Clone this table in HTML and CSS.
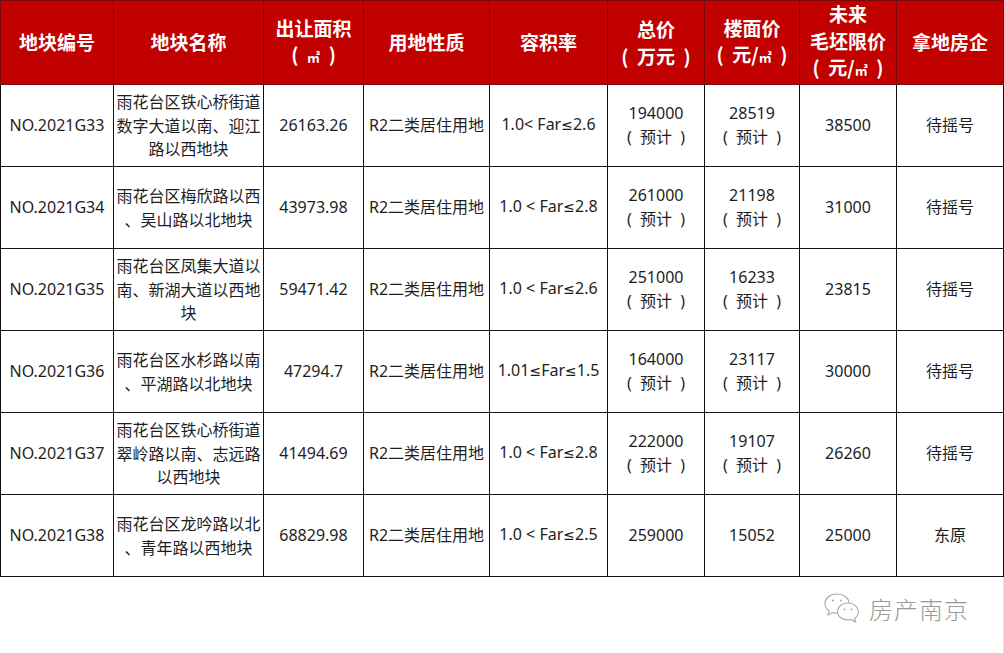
FILE: index.html
```html
<!DOCTYPE html>
<html lang="zh-CN">
<head>
<meta charset="utf-8">
<title>地块</title>
<link rel="stylesheet" href="styles.css">
</head>
<body>
<div class="page">
  <table class="land">
    <colgroup>
      <col class="c1"><col class="c2"><col class="c3"><col class="c4"><col class="c5"><col class="c6"><col class="c7"><col class="c8"><col class="c9">
    </colgroup>
    <thead>
      <tr>
        <th>地块编号</th>
        <th>地块名称</th>
        <th>出让面积<br>(&nbsp;&nbsp;<span class="unit">㎡</span>&nbsp;&nbsp;)</th>
        <th>用地性质</th>
        <th>容积率</th>
        <th>总价<br>(&nbsp;&nbsp;万元&nbsp;&nbsp;)</th>
        <th>楼面价<br>(&nbsp;&nbsp;元/<span class="unit">㎡</span>&nbsp;&nbsp;)</th>
        <th>未来<br>毛坯限价<br>(&nbsp;&nbsp;元/<span class="unit">㎡</span>&nbsp;&nbsp;)</th>
        <th>拿地房企</th>
      </tr>
    </thead>
    <tbody>
      <tr>
        <td>NO.2021G33</td>
        <td class="name">雨花台区铁心桥街道<br>数字大道以南、迎江<br>路以西地块</td>
        <td>26163.26</td>
        <td>R2二类居住用地</td>
        <td>1.0&lt; Far<span class="le">≤</span>2.6</td>
        <td>194000<br>(&nbsp;&nbsp;预计&nbsp;&nbsp;)</td>
        <td>28519<br>(&nbsp;&nbsp;预计&nbsp;&nbsp;)</td>
        <td>38500</td>
        <td>待摇号</td>
      </tr>
      <tr>
        <td>NO.2021G34</td>
        <td class="name">雨花台区梅欣路以西<br>、吴山路以北地块</td>
        <td>43973.98</td>
        <td>R2二类居住用地</td>
        <td>1.0 &lt; Far<span class="le">≤</span>2.8</td>
        <td>261000<br>(&nbsp;&nbsp;预计&nbsp;&nbsp;)</td>
        <td>21198<br>(&nbsp;&nbsp;预计&nbsp;&nbsp;)</td>
        <td>31000</td>
        <td>待摇号</td>
      </tr>
      <tr>
        <td>NO.2021G35</td>
        <td class="name">雨花台区凤集大道以<br>南、新湖大道以西地<br>块</td>
        <td>59471.42</td>
        <td>R2二类居住用地</td>
        <td>1.0 &lt; Far<span class="le">≤</span>2.6</td>
        <td>251000<br>(&nbsp;&nbsp;预计&nbsp;&nbsp;)</td>
        <td>16233<br>(&nbsp;&nbsp;预计&nbsp;&nbsp;)</td>
        <td>23815</td>
        <td>待摇号</td>
      </tr>
      <tr>
        <td>NO.2021G36</td>
        <td class="name">雨花台区水杉路以南<br>、平湖路以北地块</td>
        <td>47294.7</td>
        <td>R2二类居住用地</td>
        <td>1.01<span class="le">≤</span>Far<span class="le">≤</span>1.5</td>
        <td>164000<br>(&nbsp;&nbsp;预计&nbsp;&nbsp;)</td>
        <td>23117<br>(&nbsp;&nbsp;预计&nbsp;&nbsp;)</td>
        <td>30000</td>
        <td>待摇号</td>
      </tr>
      <tr>
        <td>NO.2021G37</td>
        <td class="name">雨花台区铁心桥街道<br>翠岭路以南、志远路<br>以西地块</td>
        <td>41494.69</td>
        <td>R2二类居住用地</td>
        <td>1.0 &lt; Far<span class="le">≤</span>2.8</td>
        <td>222000<br>(&nbsp;&nbsp;预计&nbsp;&nbsp;)</td>
        <td>19107<br>(&nbsp;&nbsp;预计&nbsp;&nbsp;)</td>
        <td>26260</td>
        <td>待摇号</td>
      </tr>
      <tr>
        <td>NO.2021G38</td>
        <td class="name">雨花台区龙吟路以北<br>、青年路以西地块</td>
        <td>68829.98</td>
        <td>R2二类居住用地</td>
        <td>1.0 &lt; Far<span class="le">≤</span>2.5</td>
        <td>259000</td>
        <td>15052</td>
        <td>25000</td>
        <td>东原</td>
      </tr>
    </tbody>
  </table>
  <div class="footer">
    <div class="mark">
      <svg class="wx" width="38" height="34" viewBox="0 0 38 34" fill="none" stroke="#a8a8a8" stroke-width="1.1">
        <path d="M14 2C7 2 2 6.3 2 11.5c0 3 1.6 5.6 4.2 7.4L5 23l4.6-2.5c1.3.4 2.8.6 4.4.6"/>
        <path d="M14 2c6.5 0 11.6 3.8 12 8.6"/>
        <circle cx="10" cy="8.5" r="1" fill="#a8a8a8" stroke="none"/>
        <circle cx="18" cy="8.5" r="1" fill="#a8a8a8" stroke="none"/>
        <path d="M25 11c-6 0-10.5 3.8-10.5 8.5S19 28 25 28c1.2 0 2.4-.2 3.5-.5L32.5 30l-1-3.5c2.3-1.6 3.8-4 3.8-6.5C35.3 14.8 30.8 11 25 11z"/>
        <circle cx="21.5" cy="17.5" r="0.9" fill="#a8a8a8" stroke="none"/>
        <circle cx="28.5" cy="17.5" r="0.9" fill="#a8a8a8" stroke="none"/>
      </svg>
      <span class="brand">房产南京</span>
    </div>
  </div>
</div>
</body>
</html>
```

FILE: styles.css
```css
html, body {
  margin: 0;
  padding: 0;
  background: #ffffff;
}
.page {
  width: 1003px;
  height: 653px;
  border-right: 1px solid #e2e2e2;
  box-sizing: content-box;
  font-family: "Noto Sans", "Noto Sans CJK SC", sans-serif;
  color: #1e1e1e;
}
.land {
  border-collapse: collapse;
  table-layout: fixed;
  width: 1003px;
}
.c1 { width: 113px; }
.c2 { width: 150px; }
.c3 { width: 100px; }
.c4 { width: 126px; }
.c5 { width: 118px; }
.c6 { width: 97px; }
.c7 { width: 95px; }
.c8 { width: 97px; }
.c9 { width: 107px; }
.land th {
  background: #c10000;
  color: #ffffff;
  font-family: "Noto Sans CJK SC", sans-serif;
  font-weight: 700;
  font-size: 19px;
  line-height: 26.5px;
  height: 84px;
  padding: 0;
  border: 1px solid #7a0a0a;
  text-align: center;
  vertical-align: middle;
  box-sizing: border-box;
  white-space: nowrap;
}
.land th .unit {
  font-size: 13px;
}
.land td {
  height: 82px;
  padding: 0;
  border: 1px solid #111111;
  text-align: center;
  vertical-align: middle;
  font-size: 16px;
  line-height: 23.5px;
  box-sizing: border-box;
  white-space: nowrap;
}
.land td .le {
  font-family: "DejaVu Sans", sans-serif;
  font-size: 14px;
}
.land td.name {
  font-family: "Noto Sans CJK SC", sans-serif;
  font-size: 16px;
  line-height: 23.5px;
}
.footer {
  display: flex;
  justify-content: flex-end;
  padding: 14px 34px 0 0;
}
.mark {
  display: flex;
  align-items: center;
  gap: 8px;
}
.wx {
  display: block;
}
.brand {
  font-family: "Noto Sans CJK SC", sans-serif;
  font-weight: 300;
  font-size: 24px;
  color: #9a9a9a;
  letter-spacing: 1px;
}
```
